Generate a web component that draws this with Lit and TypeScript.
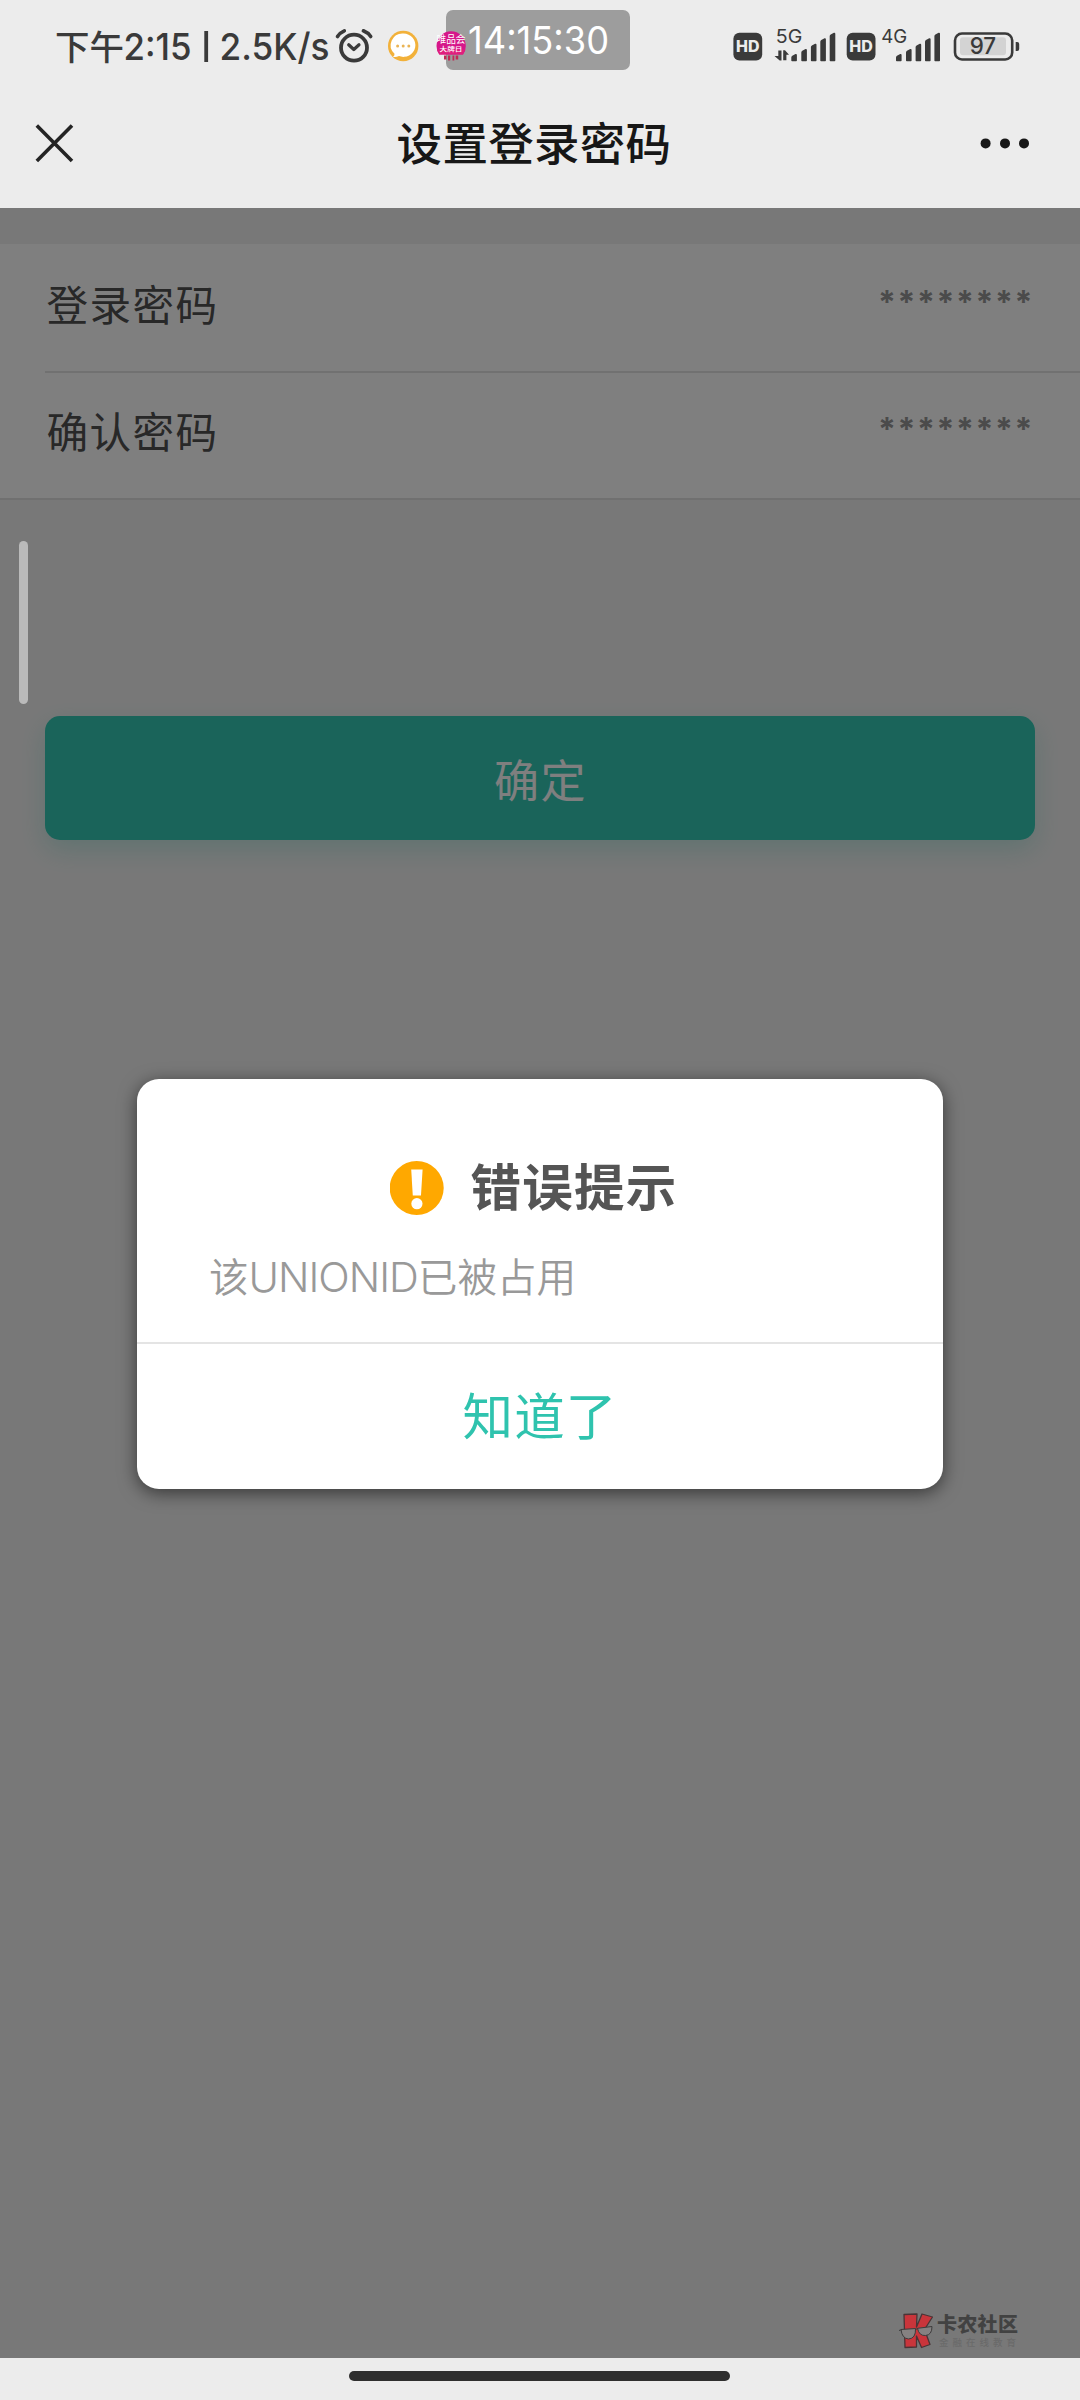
import { LitElement, html, svg, css } from "lit";
import { customElement, property } from "lit/decorators.js";

const BAR_TOPS = [54, 49, 43.7, 38.3, 32.7];
const BAR_OFFSETS = [0, 10, 19.6, 29, 38.4];

const signalBars = (x: number) => svg`
  ${BAR_TOPS.map((top, i) => {
    const left = x + BAR_OFFSETS[i];
    return svg`<path d="M${left} 60.5V${top + 3.4}Q${left} ${top + 2.2} ${left + 1} ${top + 1.7}L${left + 4.2} ${top}Q${left + 5.6} ${top - 0.3} ${left + 5.6} ${top + 1}V60.5Q${left + 5.6} 61.3 ${left + 4.8} 61.3H${left + 0.8}Q${left} 61.3 ${left} 60.5Z"/>`;
  })}`;

const hdBadge = (x: number) => svg`
  <rect x=${x} y="32.7" width="28.8" height="27.8" rx="6"/>
  <text class="hd" x=${x + 14.4} y="52" text-anchor="middle" textLength="23.5" lengthAdjust="spacingAndGlyphs">HD</text>`;

@customElement("status-bar")
class StatusBar extends LitElement {
  static styles = css`
    :host { display: block; height: 80px; position: relative; color: #3a3a3a; }
    .bar { display: flex; justify-content: space-between; height: 80px; }
    svg { display: block; height: 80px; }
    text { font-family: Inter, "Noto Sans CJK SC", sans-serif; fill: #3a3a3a; }
    .cjk { font-family: "Noto Sans CJK SC", sans-serif; font-size: 34px; font-weight: 500; }
    .big { font-size: 37.2px; font-weight: 500; }
    .hd { font-size: 15.4px; font-weight: 800; fill: #ececec; }
    .net { font-size: 19px; }
    .level { font-size: 22.6px; font-weight: 500; }
    .vip { font-family: "Noto Sans CJK SC", sans-serif; font-size: 10px; font-weight: 400; fill: #fff; }
    .vip2 { font-family: "Noto Sans CJK SC", sans-serif; font-size: 6px; font-weight: 500; fill: #fff; }
    .clock { position: absolute; left: 446px; top: 10px; width: 184px; height: 60px; border-radius: 7px; background: #9d9d9d; }
    .clock svg { height: 60px; }
    .time { font-size: 38.4px; fill: #fff; }
    .app { position: absolute; left: 436px; top: 31px; }
    .app svg { height: 30px; }
  `;
  render() {
    return html`
      <div class="bar">
        <svg width="430" height="80" viewBox="0 0 430 80">
          <text class="cjk" x="55" y="59.500" textLength="69" lengthAdjust="spacingAndGlyphs">下午</text>
          <text class="big" x="123.500" y="60" textLength="68" lengthAdjust="spacingAndGlyphs">2:15</text>
          <rect x="204.300" y="31" width="3.800" height="31" fill="#3a3a3a"/>
          <text class="big" x="219.500" y="60" textLength="110" lengthAdjust="spacingAndGlyphs">2.5K/s</text>
          <g fill="none" stroke="#3a3a3a" stroke-linecap="round" stroke-linejoin="round">
            <circle cx="354" cy="47.700" r="13" stroke-width="3.800"/>
            <path d="M348.700 44.800L353.800 49.500L359 44.800" stroke-width="3.200"/>
            <path d="M337.500 36.500Q340 32.600 344.300 30.800M363.400 30.800Q368 32.600 370.700 36.500" stroke-width="3.600"/>
          </g>
          <circle cx="403.200" cy="46" r="15.200" fill="#f2b13a"/>
          <path d="M403.500 33.500a12 11.700 0 1 1-4.500 22.600q-3.500 1.400-6 0.600q1.800-1.200 1.500-3a12 11.700 0 0 1 9-20.200z" fill="#fff"/>
          <g fill="#eab455"><circle cx="397.600" cy="46" r="1.500"/><circle cx="403.200" cy="46" r="1.500"/><circle cx="408.800" cy="46" r="1.500"/></g>
        </svg>
        <svg width="360" height="80" viewBox="720 0 360 80" fill="#3a3a3a">
          ${hdBadge(733.4)}
          <text class="net" x="775.800" y="42.900" textLength="26.500" lengthAdjust="spacingAndGlyphs">5G</text>
          <path d="M778.300 50.500h3.200v10h-1.800l-5.200-4.600h3.800zM783.200 60.300v-10h1.800l4 4.400h-2.600v5.600z"/>
          ${signalBars(791.3)}
          ${hdBadge(846.7)}
          <text class="net" x="881.200" y="42.900" textLength="26" lengthAdjust="spacingAndGlyphs">4G</text>
          ${signalBars(896)}
          <rect x="955" y="33.500" width="57.200" height="26" rx="7" fill="none" stroke="#3a3a3a" stroke-width="2.600"/>
          <rect x="960" y="37.300" width="46" height="18" rx="3" fill="#d3d3d3"/>
          <path d="M1015.700 42h1.500q2 0 2 2v5q0 2-2 2h-1.500z"/>
          <text class="level" x="969.700" y="54" textLength="26.500" lengthAdjust="spacingAndGlyphs">97</text>
        </svg>
      </div>
      <div class="clock">
        <svg width="184" height="60" viewBox="0 0 184 60">
          <text class="time" x="22" y="44" textLength="141" lengthAdjust="spacingAndGlyphs">14:15:30</text>
        </svg>
      </div>
      <div class="app">
        <svg width="30" height="30" viewBox="0 0 30 30">
          <path d="M0.500 15A14.500 14.500 0 0 1 29.800 15Q29.800 20 27 23.600H3.300Q0.500 20 0.500 15Z" fill="#d6168a"/>
          <path d="M1 18.500H29.300L27 23.600H3.300Z" fill="#e01f7c"/>
          <text class="vip" x="0.500" y="12.300" textLength="29" lengthAdjust="spacingAndGlyphs">唯品会</text>
          <text class="vip2" x="3.500" y="19.500" textLength="23" lengthAdjust="spacingAndGlyphs">大牌日</text>
          <path d="M8 24.500h2.500v4H8zM12 24.500h2.200v5H12zM16.500 24.500h1.800v5h-1.800zM19.700 24.500h2.500v4h-2.500z" fill="#c02a55"/>
        </svg>
      </div>
    `;
  }
}

@customElement("nav-bar")
class NavBar extends LitElement {
  @property() heading = "";
  static styles = css`
    :host { display: flex; align-items: center; justify-content: space-between; height: 128px; padding: 0 48px 0 34px; }
    .title { font: 500 45.5px/66px "Noto Sans CJK SC", sans-serif; letter-spacing: 0.3px; color: #171717; padding: 0 12px 7px 0; }
    svg { display: block; }
  `;
  render() {
    return html`
      <svg width="68" height="42" viewBox="0 0 68 42">
        <path d="M2.800 2.500L38 38M38 2.500L2.800 38" stroke="#242424" stroke-width="3.600" fill="none"/>
      </svg>
      <div class="title">${this.heading}</div>
      <svg width="54" height="12" viewBox="0 0 54 12" fill="#171717">
        <circle cx="7.600" cy="5.400" r="5"/><circle cx="27" cy="5.400" r="5"/><circle cx="46" cy="5.400" r="5"/>
      </svg>
    `;
  }
}

@customElement("password-row")
class PasswordRow extends LitElement {
  @property() label = "";
  @property() value = "";
  static styles = css`
    :host { display: flex; justify-content: space-between; box-sizing: border-box; height: 127px; padding: 27px 48px 0 1.5px; }
    .label { font: 400 41.6px/64px "Noto Sans CJK SC", sans-serif; letter-spacing: 1.4px; color: #505050; }
    .value { font: 700 32px/64px Inter, sans-serif; letter-spacing: 1.6px; margin-right: -2px; color: #969696; }
  `;
  render() {
    return html`<div class="label">${this.label}</div><div class="value">${this.value}</div>`;
  }
}

@customElement("error-dialog")
class ErrorDialog extends LitElement {
  static styles = css`
    :host { display: flex; flex-direction: column; width: 806px; height: 410px; border-radius: 22px; background: #fff; box-shadow: 0 4px 18px rgba(0, 0, 0, 0.55); overflow: hidden; }
    .body { flex: 1; padding: 72px 72px 0; }
    .head { display: flex; justify-content: center; align-items: center; gap: 27px; height: 74px; padding-right: 13px; }
    .title { font: 700 50.5px/74px "Noto Sans CJK SC", sans-serif; letter-spacing: 1.2px; color: #555; padding-bottom: 8px; }
    .text { margin-top: 21px; font: 350 41.4px/58px Inter, "Noto Sans CJK SC", sans-serif; letter-spacing: -1px; color: #999; white-space: nowrap; }
    .cjk { font-family: "Noto Sans CJK SC", sans-serif; font-size: 39.6px; letter-spacing: 0; }
    .action { display: flex; justify-content: center; height: 147px; border-top: 2px solid #e4e4e4; box-sizing: border-box; padding: 32px 0 0; font: 400 50.5px/74px "Noto Sans CJK SC", sans-serif; letter-spacing: 1.2px; color: #2fc3ae; }
    svg { display: block; }
  `;
  render() {
    return html`
      <div class="body">
        <div class="head">
          <svg width="54" height="54" viewBox="0 0 54 54">
            <circle cx="26.700" cy="27" r="27" fill="#ffa800"/>
            <path d="M21.200 8.500h11.400l-1.600 26h-8.200z" fill="#fff"/>
            <circle cx="26.900" cy="42.700" r="5.600" fill="#fff"/>
          </svg>
          <div class="title">错误提示</div>
        </div>
        <div class="text"><span class="cjk">该</span>UNIONID<span class="cjk">已被占用</span></div>
      </div>
      <div class="action">知道了</div>
    `;
  }
}

@customElement("community-mark")
class CommunityMark extends LitElement {
  static styles = css`
    :host { display: flex; gap: 3px; }
    svg { display: block; }
    .words { display: flex; flex-direction: column; }
    .name { font: 900 20px/22px "Noto Sans CJK SC", sans-serif; letter-spacing: 0.3px; color: #424242; }
    .sub { margin-top: 1px; font: 500 9.5px/12px "Noto Sans CJK SC", sans-serif; letter-spacing: 4px; padding-left: 2px; color: #6a6a6a; }
  `;
  render() {
    return html`
      <svg width="35" height="37" viewBox="0 0 35 37">
        <g fill="#c9353b" stroke="#4a3436" stroke-width="1.300" stroke-linejoin="round">
          <path d="M5 1.500L18 1L17.500 14L23 1L33.500 4L25.500 16.500L31 31.500L22.500 34.500L17.500 23L17.500 34L6 34.500Z"/>
        </g>
        <g fill="#858181" stroke="#3c3c3c" stroke-width="1">
          <path d="M2 16.500L16.500 15.500Q17 25.500 9.500 26Q3 25.500 2 16.500Z"/>
          <path d="M18.500 15.300L33 13.500Q33 22 26.500 22.500Q20 23 18.500 15.300Z"/>
          <path d="M0 17.500L3 16.500M16 16.500L19 15.500" fill="none"/>
        </g>
      </svg>
      <div class="words">
        <div class="name">卡农社区</div>
        <div class="sub">金融在线教育</div>
      </div>
    `;
  }
}

@customElement("app-root")
class AppRoot extends LitElement {
  static styles = css`
    :host { display: flex; flex-direction: column; width: 1080px; height: 2400px; background: #ececec; overflow: hidden; }
    .page { position: relative; flex: 1; background: #f1f1f1; padding-top: 36px; }
    .list { background: #fff; padding-left: 45px; height: 254px; border-bottom: 2px solid #e0e0e0; }
    .line { height: 2px; background: #e2e2e2; margin-bottom: -2px; }
    .submit { display: flex; align-items: center; justify-content: center; box-sizing: border-box; width: 990px; height: 124px; margin: 216px auto 0; padding: 1px 0 0 1px; border-radius: 15px; background: #34c8b4; box-shadow: 0 10px 26px rgba(52, 200, 180, 0.25); font: 400 45px/66px "Noto Sans CJK SC", sans-serif; letter-spacing: 1.5px; color: #fff; }
    .mask { position: absolute; inset: 0; display: flex; align-items: center; justify-content: center; background: rgba(0, 0, 0, 0.5); padding: 2px 0 0; }
    .handle { position: absolute; left: 19px; top: 333px; width: 9px; height: 163px; border-radius: 5px; background: #bababa; }
    .mark { position: absolute; left: 899px; top: 2105px; }
    .home { display: flex; justify-content: center; height: 29px; padding: 13px 1px 0 0; }
    .pill { width: 381px; height: 10px; border-radius: 5px; background: #2e2e2e; }
  `;
  render() {
    return html`
      <status-bar></status-bar>
      <nav-bar heading="设置登录密码"></nav-bar>
      <div class="page">
        <div class="list">
          <password-row label="登录密码" value="********"></password-row>
          <div class="line"></div>
          <password-row label="确认密码" value="********"></password-row>
        </div>
        <div class="submit">确定</div>
        <div class="mask"><error-dialog></error-dialog></div>
        <div class="handle"></div>
        <community-mark class="mark"></community-mark>
      </div>
      <div class="home"><div class="pill"></div></div>
    `;
  }
}
